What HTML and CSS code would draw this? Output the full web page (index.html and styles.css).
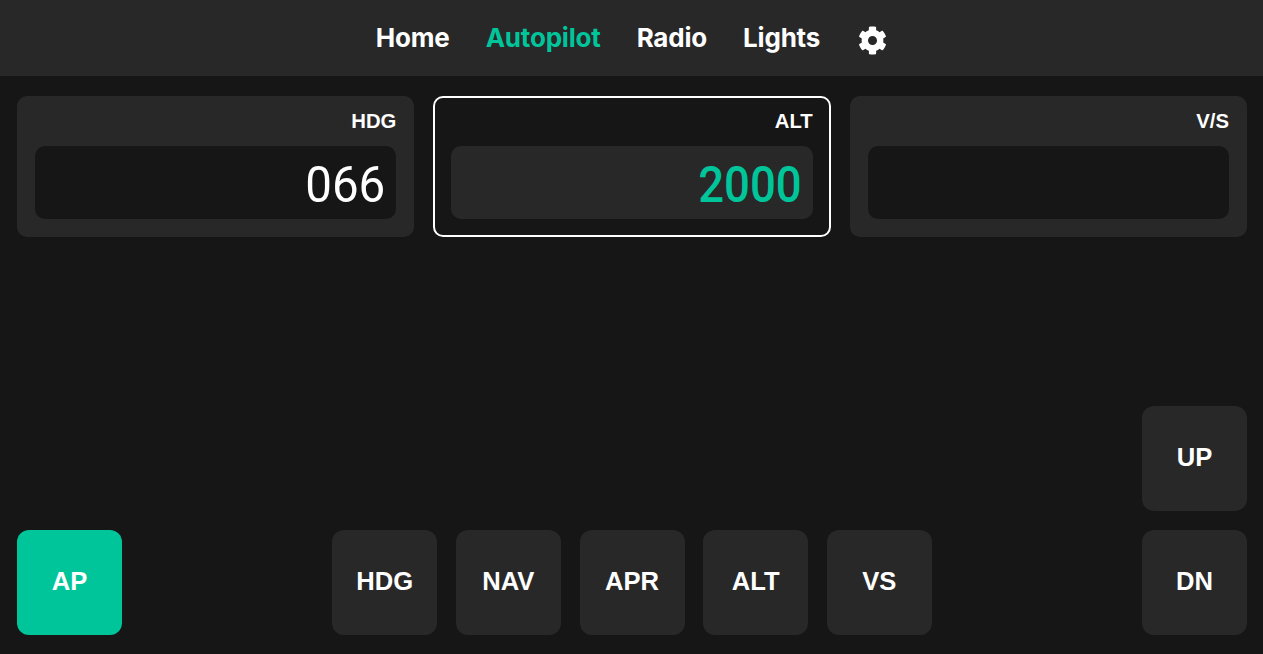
FILE: index.html
```html
<!DOCTYPE html>
<html lang="en">
<head>
    <meta charset="UTF-8">
    <meta name="viewport" content="width=device-width, initial-scale=1.0">
    <title>Autopilot</title>
    <link rel="stylesheet" href="styles.css">
</head>
<body>
    <!-- Top navigation -->
    <nav class="topbar">
        <a class="nav-link" href="#">Home</a>
        <a class="nav-link active" href="#">Autopilot</a>
        <a class="nav-link" href="#">Radio</a>
        <a class="nav-link" href="#">Lights</a>
        <a class="nav-icon" href="#" aria-label="Settings">
            <svg viewBox="0 0 512 512" width="29" height="29" fill="currentColor"><path d="M487.4 315.7l-42.6-24.6c4.3-23.2 4.3-47 0-70.2l42.6-24.6c4.9-2.8 7.1-8.6 5.5-14-11.1-35.6-30-67.8-54.7-94.6-3.8-4.1-10-5.1-14.8-2.3L380.8 110c-17.9-15.4-38.5-27.3-60.8-35.1V25.8c0-5.6-3.9-10.5-9.4-11.7-36.7-8.2-74.3-7.8-109.2 0-5.5 1.2-9.4 6.1-9.4 11.7V75c-22.2 7.9-42.8 19.8-60.8 35.1L88.7 85.5c-4.9-2.8-11-1.9-14.8 2.3-24.7 26.7-43.6 58.9-54.7 94.6-1.7 5.4.6 11.2 5.5 14L67.3 221c-4.3 23.2-4.3 47 0 70.2l-42.6 24.6c-4.9 2.8-7.1 8.6-5.5 14 11.1 35.6 30 67.8 54.7 94.6 3.8 4.1 10 5.1 14.8 2.3l42.6-24.6c17.9 15.4 38.5 27.3 60.8 35.1v49.2c0 5.6 3.9 10.5 9.4 11.7 36.7 8.2 74.3 7.8 109.2 0 5.5-1.2 9.4-6.1 9.4-11.7v-49.2c22.2-7.9 42.8-19.8 60.8-35.1l42.6 24.6c4.9 2.8 11 1.9 14.8-2.3 24.7-26.7 43.6-58.9 54.7-94.6 1.5-5.5-.7-11.3-5.6-14.1zM256 336c-44.1 0-80-35.9-80-80s35.9-80 80-80 80 35.9 80 80-35.9 80-80 80z"/></svg>
        </a>
    </nav>

    <main class="panel">
        <!-- Readouts -->
        <div class="readouts">
            <div class="readout">
                <div class="readout-label">HDG</div>
                <div class="readout-value"><span class="digits">066</span></div>
            </div>
            <div class="readout selected">
                <div class="readout-label">ALT</div>
                <div class="readout-value"><span class="digits">2000</span></div>
            </div>
            <div class="readout">
                <div class="readout-label">V/S</div>
                <div class="readout-value"></div>
            </div>
        </div>

        <!-- Buttons -->
        <div class="controls">
            <button class="key on">AP</button>
            <div class="modes">
                <button class="key">HDG</button>
                <button class="key">NAV</button>
                <button class="key">APR</button>
                <button class="key">ALT</button>
                <button class="key">VS</button>
            </div>
            <div class="updown">
                <button class="key">UP</button>
                <button class="key">DN</button>
            </div>
        </div>
    </main>
</body>
</html>
```

FILE: styles.css
```css
html, body {
    height: 100%;
}
body {
    margin: 0;
    display: flex;
    flex-direction: column;
    overflow: hidden;
    background-color: #161616;
    color: #fff;
    font-family: "Liberation Sans", Arial, sans-serif;
}
.topbar {
    flex: none;
    height: 76px;
    display: flex;
    align-items: center;
    justify-content: center;
    gap: 36px;
    background-color: #282828;
}
.nav-link {
    padding-bottom: 2px;
    color: #fff;
    text-decoration: none;
    font-family: "Inter", sans-serif;
    font-size: 26px;
    font-weight: 700;
    letter-spacing: -0.2px;
}
.nav-link.active {
    color: #00c59b;
}
.nav-icon {
    display: flex;
    color: #fff;
    margin-left: 2px;
    margin-top: 4px;
}
.panel {
    flex: 1;
    display: flex;
    flex-direction: column;
    justify-content: space-between;
    padding: 20px 16px 19px 17px;
}
.readouts {
    display: grid;
    grid-template-columns: repeat(3, 1fr);
    gap: 19px;
}
.readout {
    box-sizing: border-box;
    height: 141px;
    padding: 14px 18px 18px;
    border-radius: 10px;
    background-color: #282828;
}
.readout-label {
    height: 36px;
    font-size: 20.3px;
    font-weight: 700;
    line-height: 23px;
    text-align: right;
}
.readout-value {
    height: 73px;
    display: flex;
    align-items: center;
    justify-content: flex-end;
    padding-right: 11px;
    border-radius: 10px;
    background-color: #161616;
}
.digits {
    padding-top: 4px;
    font-family: "Roboto", sans-serif;
    font-size: 50px;
    font-weight: 400;
    line-height: 68px;
    transform: scaleX(0.95);
    transform-origin: right center;
}
.readout.selected {
    padding: 12px 16px 16px;
    border: 2px solid #fff;
    background-color: #161616;
}
.readout.selected .readout-value {
    background-color: #282828;
}
.readout.selected .digits {
    color: #00c59b;
    font-weight: 500;
    transform: scaleX(0.91);
}
.controls {
    display: flex;
    align-items: flex-end;
    justify-content: space-between;
}
.modes {
    display: flex;
    gap: 18.7px;
}
.updown {
    display: flex;
    flex-direction: column;
    gap: 19px;
}
.key {
    width: 105px;
    height: 105px;
    padding: 0 0 3px;
    border: none;
    border-radius: 12px;
    background-color: #282828;
    color: #fff;
    font-family: "Liberation Sans", Arial, sans-serif;
    font-size: 25.6px;
    font-weight: 700;
    cursor: pointer;
}
.key.on {
    background-color: #00c59b;
}
```
